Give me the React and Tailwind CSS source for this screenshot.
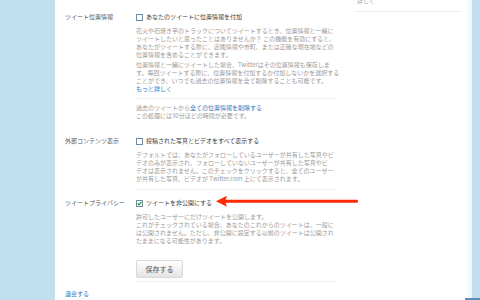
import React from "react";

const font = { fontFamily: '"Noto Sans CJK JP", "Noto Sans", sans-serif' };

function Box({ checked }) {
  return (
    <svg width="7" height="7" viewBox="0 0 7 7" className="shrink-0 mr-[3px]">
      <rect x="0.5" y="0.5" width="6" height="6" fill="#fff" stroke="#6f8aa3" strokeWidth="1" />
      {checked && (
        <path d="M1.6 3.4 L2.9 4.8 L5.4 1.9" fill="none" stroke="#22a022" strokeWidth="1.3" />
      )}
    </svg>
  );
}

function Row({ label, children }) {
  return (
    <div className="flex">
      <div className="w-[71px] shrink-0 text-[6px] leading-[10px] text-[#555]">{label}</div>
      <div className="w-[205px] whitespace-nowrap">{children}</div>
    </div>
  );
}

function Check({ checked, text }) {
  return (
    <div className="flex items-center h-[10px] text-[6px] leading-[10px] text-[#3a3a3a]">
      <Box checked={checked} />
      <span>{text}</span>
    </div>
  );
}

export default function App() {
  return (
    <div className="w-[480px] h-[300px] flex overflow-hidden bg-white relative" style={font}>
      <div className="w-[55px] shrink-0 bg-[#c2dff0]" />
      <div className="w-[290px] shrink-0 pl-[10px] pt-[12px]">
        <Row label="ツイート位置情報">
          <Check text="あなたのツイートに位置情報を付加" />
          <div className="mt-[5px] text-[6px] leading-[8px] text-[#9a9a9a]">
            <p>花火や石焼き芋のトラックについてツイートするとき、位置情報と一緒に</p>
            <p>ツイートしたいと思ったことはありませんか？ この機能を有効にすると、</p>
            <p>あなたがツイートする際に、近隣情報や市町、または正確な現在地などの</p>
            <p>位置情報を含めることができます。</p>
            <div className="mt-[2px]">
              <p>位置情報と一緒にツイートした場合、Twitterはその位置情報も保存しま</p>
              <p>す。毎回ツイートする際に、位置情報を付加するか付加しないかを選択する</p>
              <p>ことができ、いつでも過去の位置情報を全て削除することも可能です。</p>
            </div>
            <p className="text-[#2b7bc4]">もっと詳しく</p>
          </div>
          <div className="mt-[5px] w-[200px] border-t border-[#efefef] pt-[5px] text-[6px] leading-[8px] text-[#9a9a9a]">
            <p>
              過去のツイートから<span className="text-[#2b7bc4]">全ての位置情報を削除する</span>
            </p>
            <p>この処理には30分ほどの時間が必要です。</p>
          </div>
        </Row>
        <div className="mt-[16px]">
          <Row label="外部コンテンツ表示">
            <Check text="投稿された写真とビデオをすべて表示する" />
            <div className="mt-[5px] text-[6px] leading-[8px] text-[#9a9a9a]">
              <p>デフォルトでは、あなたがフォローしているユーザーが共有した写真やビ</p>
              <p>デオのみが表示され、フォローしていないユーザーが共有した写真やビ</p>
              <p>デオは表示されません。このチェックをクリックすると、全てのユーザー</p>
              <p>が共有した写真、ビデオが Twitter.com 上にて表示されます。</p>
            </div>
            <div className="mt-[6px] w-[200px] border-t border-[#efefef]" />
          </Row>
        </div>
        <div className="mt-[8px]">
          <Row label="ツイートプライバシー">
            <Check checked text="ツイートを非公開にする" />
            <div className="mt-[5px] text-[6px] leading-[8px] text-[#9a9a9a]">
              <p>許可したユーザーにだけツイートを公開します。</p>
              <p>これがチェックされている場合、あなたのこれからのツイートは、一般に</p>
              <p>は公開されません。ただし、非公開に設定する以前のツイートは公開され</p>
              <p>たままになる可能性があります。</p>
            </div>
            <button className="mt-[15px] w-[47px] h-[18px] rounded-[2px] border border-[#d8d8d8] bg-gradient-to-b from-white to-[#e4e4e4] text-[7px] text-[#555] flex items-center justify-center">
              保存する
            </button>
            <div className="mt-[3px] w-[200px] border-t border-[#f0f0f0]" />
          </Row>
        </div>
        <p className="mt-[8px] text-[6px] leading-[8px] text-[#2b7bc4]">退会する</p>
      </div>
      <div className="w-[120px] shrink-0 pl-[10px] pr-[3px]">
        <div className="h-[12px] border-b border-[#eeeeee] overflow-hidden">
          <p className="-mt-[3px] ml-[2px] text-[6px] leading-[8px] text-[#aaa]">詳しく</p>
        </div>
      </div>
      <div className="w-[7px] shrink-0 bg-gradient-to-r from-white to-[#eef4f8]" />
      <div className="flex-1 bg-[#c2dff0]" />
      <div className="absolute left-[465px] bottom-0 w-[15px] h-[2px] bg-[#5a8fc0]" />
      <svg className="absolute left-[215px] top-[195px]" width="146" height="13" viewBox="0 0 146 13">
        <path d="M9 4.8 L142 4.8 Q144.5 6.3 142 7.8 L9 7.8 Z" fill="#ff2a00" />
        <path d="M1 6.3 L12 0.8 L10 6.3 L12 11.8 Z" fill="#ff2a00" />
      </svg>
    </div>
  );
}
